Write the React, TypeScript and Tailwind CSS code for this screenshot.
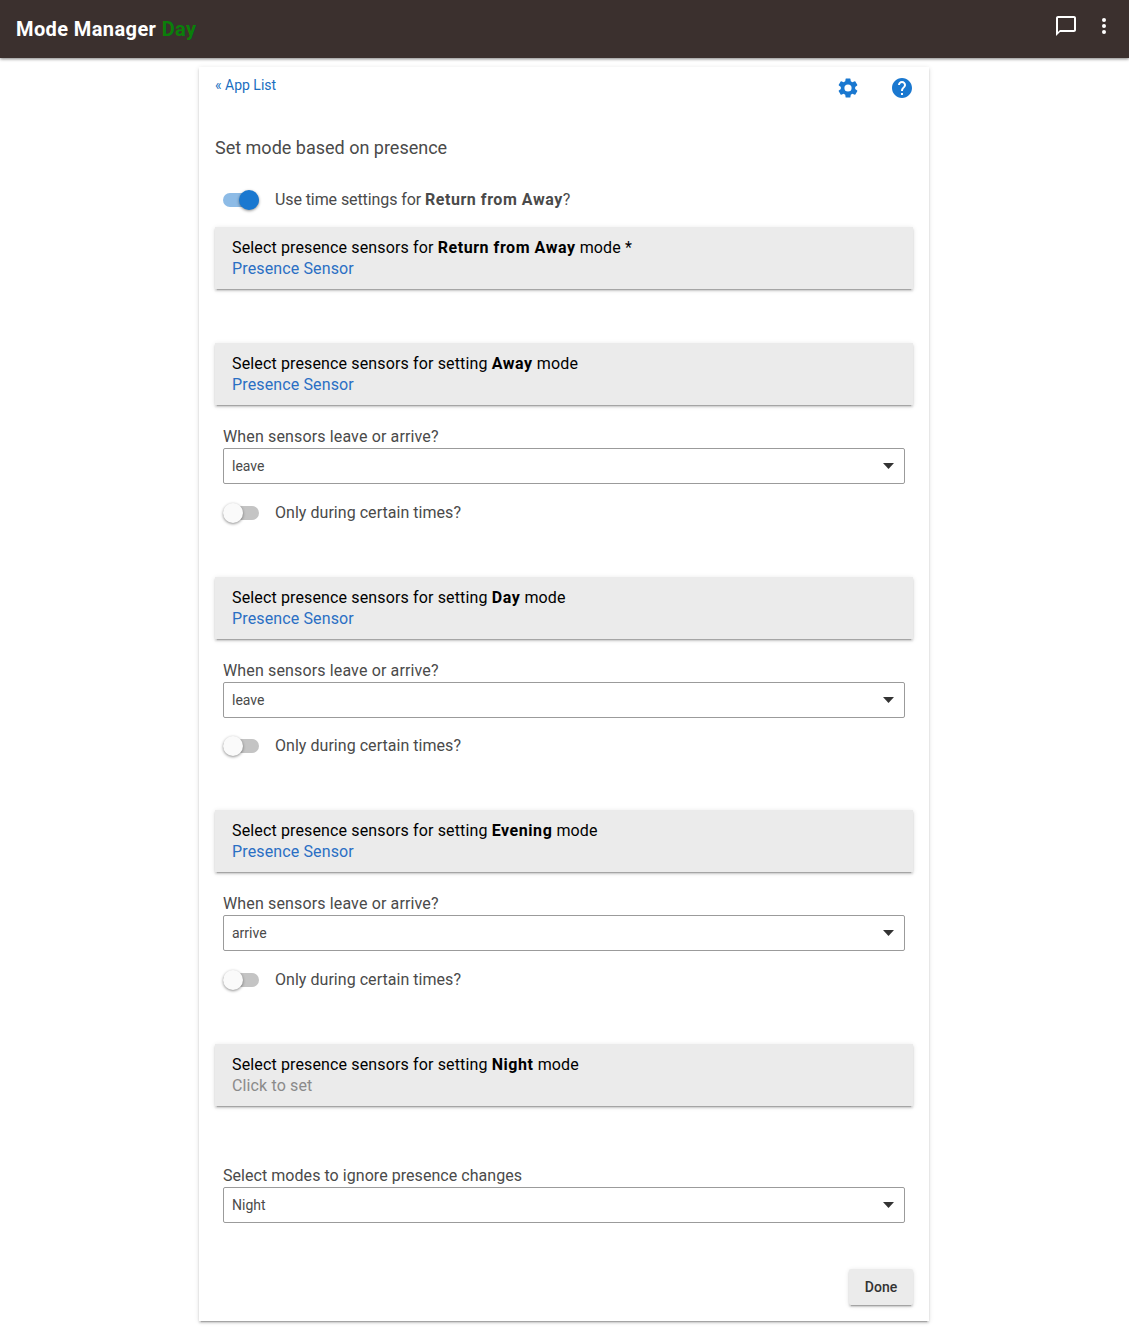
function Toggle({ on, label }: { on?: boolean; label: React.ReactNode }) {
  return (
    <div className="flex h-6 items-center pl-2">
      <div className="relative h-3.5 w-9 shrink-0">
        <div className={`h-3.5 w-9 rounded-full ${on ? "bg-[#8dbbe6]" : "bg-[#c4c4c4]"}`} />
        <div
          className={`absolute top-[-3px] size-5 rounded-full shadow-[0_1px_3px_rgba(0,0,0,0.45)] ${
            on ? "right-0 bg-[#1a78d0]" : "left-0 bg-[#fafafa]"
          }`}
        />
      </div>
      <span className="ml-4 text-base tracking-[0.04px] text-[#4a4a4a]">{label}</span>
    </div>
  );
}

function SensorBox({ prefix, mode, suffix, value, unset }: {
  prefix: string;
  mode: string;
  suffix: string;
  value: string;
  unset?: boolean;
}) {
  return (
    <div className="h-[62px] bg-[#ebebeb] px-[17px] pt-[10px] text-base leading-[21px] shadow-[0_2px_2px_0_rgba(0,0,0,0.14),0_3px_1px_-2px_rgba(0,0,0,0.2),0_1px_5px_0_rgba(0,0,0,0.12)]">
      <div className="tracking-[0.14px] text-black">
        {prefix} <b className="font-bold tracking-[0.55px]">{mode}</b> {suffix}
      </div>
      <div className={`tracking-[0.13px] ${unset ? "text-[#8a8a8a]" : "text-[#2a6fc4]"}`}>{value}</div>
    </div>
  );
}

function SelectField({ label, value }: { label: React.ReactNode; value: string }) {
  return (
    <div className="px-2">
      <div className="h-[21px] text-base leading-[21px] tracking-[0.14px] text-[#4a4a4a]">{label}</div>
      <div className="mt-[1px] flex h-9 items-center justify-between rounded-[2px] border border-[#9b9b9b] pl-2 pr-[10px]">
        <span className="text-sm text-[#4a4a4a]">{value}</span>
        <svg width="11" height="6" viewBox="0 0 11 6" className="block">
          <path d="M0 0h11L5.5 6z" fill="#333" />
        </svg>
      </div>
    </div>
  );
}

export default function App() {
  return (
    <div className="min-h-[1327px] bg-white font-['Roboto',sans-serif]">
      <header className="flex h-[58px] items-center justify-between bg-[#3b302e] pl-4 pr-[15px] shadow-[0_1px_3px_rgba(0,0,0,0.5)]">
        <h1 className="text-xl font-bold tracking-[0.4px] text-white">
          Mode Manager <span className="text-[#0a7f0a]">Day</span>
        </h1>
        <div className="mb-[6px] flex items-center gap-4">
          <svg width="24" height="24" viewBox="0 0 24 24" fill="white">
            <path d="M20 2H4c-1.1 0-2 .9-2 2v18l4-4h14c1.1 0 2-.9 2-2V4c0-1.1-.9-2-2-2zm0 14H6l-2 2V4h16v12z" />
          </svg>
          <svg width="20" height="20" viewBox="0 0 20 20" fill="white">
            <circle cx="10" cy="4" r="2" />
            <circle cx="10" cy="10" r="2" />
            <circle cx="10" cy="16" r="2" />
          </svg>
        </div>
      </header>

      <main className="ml-[199px] mt-[9px] h-[1254px] w-[730px] bg-white px-4 shadow-[0_2px_2px_0_rgba(0,0,0,0.14),0_3px_1px_-2px_rgba(0,0,0,0.2),0_1px_5px_0_rgba(0,0,0,0.12)]">
        <div className="flex h-[42px] items-start justify-between">
          <a className="mt-2 text-sm text-[#1a6ec0]">« App List</a>
          <div className="-mr-px mt-[9px] flex gap-[30px]">
            <svg width="24" height="24" viewBox="0 0 24 24" fill="#1a78d0">
              <path d="M19.14 12.94c.04-.3.06-.61.06-.94s-.02-.64-.07-.94l2.03-1.58a.49.49 0 0 0 .12-.61l-1.92-3.32a.49.49 0 0 0-.59-.22l-2.39.96a7 7 0 0 0-1.62-.94l-.36-2.54a.48.48 0 0 0-.48-.41h-3.84a.47.47 0 0 0-.47.41l-.36 2.54c-.59.24-1.13.57-1.62.94l-2.39-.96a.48.48 0 0 0-.59.22L2.74 8.87a.47.47 0 0 0 .12.61l2.03 1.58c-.05.3-.09.63-.09.94s.02.64.07.94l-2.03 1.58a.49.49 0 0 0-.12.61l1.92 3.32c.12.22.37.29.59.22l2.39-.96c.5.38 1.03.7 1.62.94l.36 2.54c.05.24.24.41.48.41h3.84c.24 0 .44-.17.47-.41l.36-2.54c.59-.24 1.13-.56 1.62-.94l2.39.96c.22.08.47 0 .59-.22l1.92-3.32a.47.47 0 0 0-.12-.61zM12 15.6A3.6 3.6 0 1 1 12 8.4a3.6 3.6 0 0 1 0 7.2z" />
            </svg>
            <svg width="24" height="24" viewBox="0 0 24 24" fill="#1a78d0">
              <path d="M12 2C6.48 2 2 6.48 2 12s4.48 10 10 10 10-4.48 10-10S17.52 2 12 2zm1 17h-2v-2h2v2zm2.07-7.75-.9.92C13.45 12.9 13 13.5 13 15h-2v-.5c0-1.1.45-2.1 1.17-2.83l1.24-1.26c.37-.36.59-.86.59-1.41 0-1.1-.9-2-2-2s-2 .9-2 2H8c0-2.21 1.79-4 4-4s4 1.79 4 4c0 .88-.36 1.68-.93 2.25z" />
            </svg>
          </div>
        </div>

        <h2 className="mt-[25px] h-7 text-lg leading-7 text-[#4a4a4a]">Set mode based on presence</h2>

        <div className="mt-[26px]">
          <Toggle
            on
            label={
              <>
                <span className="tracking-[-0.09px]">Use time settings for </span>
                <b className="font-bold tracking-[0.55px]">Return from Away</b>?
              </>
            }
          />
        </div>

        <div className="mt-[15px]">
          <SensorBox prefix="Select presence sensors for" mode="Return from Away" suffix="mode *" value="Presence Sensor" />
        </div>

        <div className="mt-[54px]">
          <SensorBox prefix="Select presence sensors for setting" mode="Away" suffix="mode" value="Presence Sensor" />
        </div>
        <div className="mt-[21px]">
          <SelectField label="When sensors leave or arrive?" value="leave" />
        </div>
        <div className="mt-[17px]">
          <Toggle label="Only during certain times?" />
        </div>

        <div className="mt-[52px]">
          <SensorBox prefix="Select presence sensors for setting" mode="Day" suffix="mode" value="Presence Sensor" />
        </div>
        <div className="mt-[21px]">
          <SelectField label="When sensors leave or arrive?" value="leave" />
        </div>
        <div className="mt-4">
          <Toggle label="Only during certain times?" />
        </div>

        <div className="mt-[52px]">
          <SensorBox prefix="Select presence sensors for setting" mode="Evening" suffix="mode" value="Presence Sensor" />
        </div>
        <div className="mt-[21px]">
          <SelectField label="When sensors leave or arrive?" value="arrive" />
        </div>
        <div className="mt-[17px]">
          <Toggle label="Only during certain times?" />
        </div>

        <div className="mt-[52px]">
          <SensorBox prefix="Select presence sensors for setting" mode="Night" suffix="mode" value="Click to set" unset />
        </div>

        <div className="mt-[59px]">
          <SelectField
            label={<span className="tracking-[0.05px]">Select modes to ignore presence changes</span>}
            value="Night"
          />
        </div>

        <div className="mt-[46px] flex justify-end">
          <button className="h-9 w-16 rounded-[2px] bg-[#ebebeb] text-sm font-medium text-[#333] shadow-[0_2px_2px_0_rgba(0,0,0,0.14),0_3px_1px_-2px_rgba(0,0,0,0.2),0_1px_5px_0_rgba(0,0,0,0.12)]">
            Done
          </button>
        </div>
      </main>
    </div>
  );
}
